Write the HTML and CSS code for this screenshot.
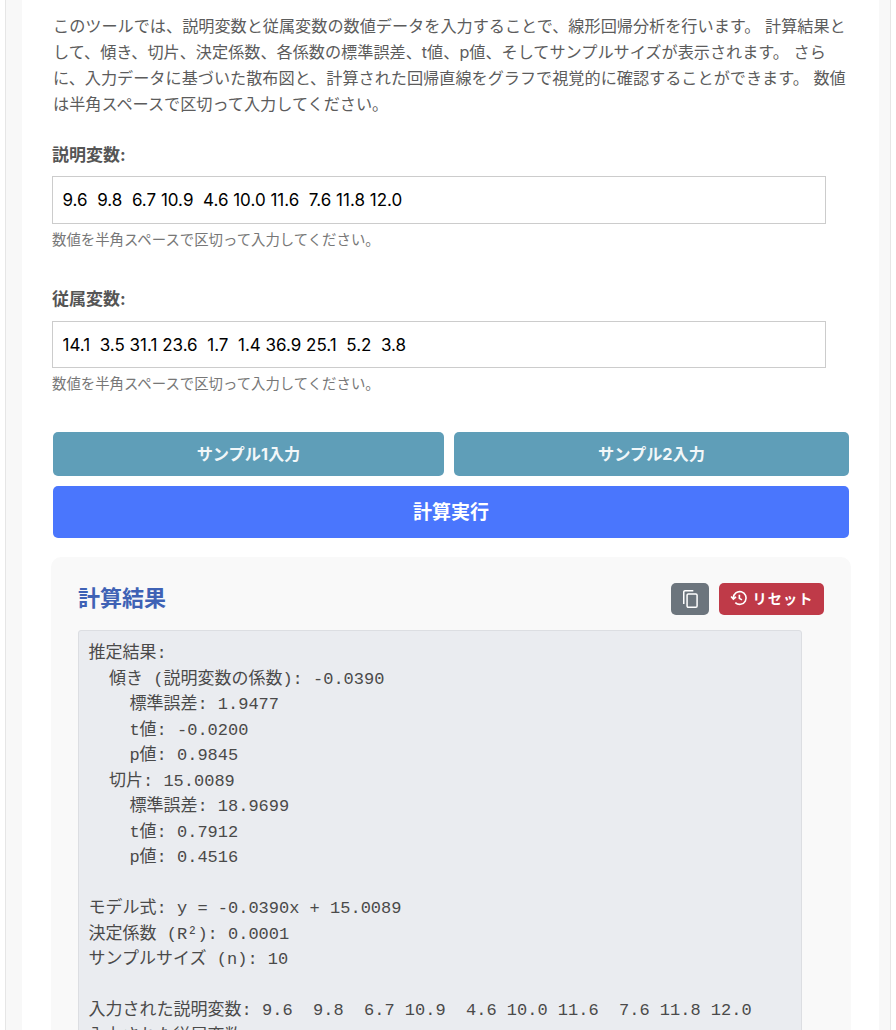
FILE: index.html
```html
<!DOCTYPE html>
<html lang="ja">
<head>
<meta charset="utf-8">
<title>線形回帰分析</title>
<link rel="stylesheet" href="styles.css">
</head>
<body>
<div class="outer">
<main class="card">
<p class="intro">このツールでは、説明変数と従属変数の数値データを入力することで、線形回帰分析を行います。 計算結果として、傾き、切片、決定係数、各係数の標準誤差、t値、p値、そしてサンプルサイズが表示されます。 さらに、入力データに基づいた散布図と、計算された回帰直線をグラフで視覚的に確認することができます。 数値は半角スペースで区切って入力してください。</p>
<div class="field">
<label class="label">説明変数:</label>
<input class="input" type="text" value="9.6  9.8  6.7 10.9  4.6 10.0 11.6  7.6 11.8 12.0">
<small class="hint">数値を半角スペースで区切って入力してください。</small>
</div>
<div class="field">
<label class="label">従属変数:</label>
<input class="input" type="text" value="14.1  3.5 31.1 23.6  1.7  1.4 36.9 25.1  5.2  3.8">
<small class="hint">数値を半角スペースで区切って入力してください。</small>
</div>
<div class="samples">
<button class="btn sample one">サンプル1入力</button>
<button class="btn sample two">サンプル2入力</button>
</div>
<button class="btn run">計算実行</button>
<section class="result">
<div class="result-head">
<h2 class="result-title">計算結果</h2>
<div class="actions">
<button class="btn icon-btn" aria-label="コピー"><svg width="20" height="20" viewBox="0 0 24 24" fill="none" stroke="#fff" stroke-width="1.800"><path d="M16 2H6A1.500 1.500 0 0 0 4.500 3.500V18"/><rect x="8.500" y="6" width="12" height="16" rx="1.500"/></svg></button>
<button class="btn reset"><svg width="18" height="18" viewBox="0 0 24 24" fill="none" stroke="#fff" stroke-width="2.200"><path d="M4.500 12a8.500 8.500 0 1 1 2.600 6.100"/><path d="M1.500 10l3 3.500 3.500-3"/><path d="M12.500 7.500V12.500l3.500 2"/></svg>リセット</button>
</div>
</div>
<pre class="output">推定結果:
  傾き (説明変数の係数): -0.0390
    標準誤差: 1.9477
    t値: -0.0200
    p値: 0.9845
  切片: 15.0089
    標準誤差: 18.9699
    t値: 0.7912
    p値: 0.4516

モデル式: y = -0.0390x + 15.0089
決定係数 (R²): 0.0001
サンプルサイズ (n): 10

入力された説明変数: 9.6  9.8  6.7 10.9  4.6 10.0 11.6  7.6 11.8 12.0
入力された従属変数: 14.1  3.5 31.1 23.6  1.7  1.4 36.9 25.1  5.2  3.8</pre>
</section>
</main>
</div>
</body>
</html>
```
FILE: styles.css
```css
html, body { margin: 0; padding: 0; height: 1030px; overflow: hidden; background: #fff; }
body { font-family: Inter, "Noto Sans CJK JP", sans-serif; color: #555; }
.outer { margin: 0 5px; height: 1030px; background: #f8f8f8; border-left: 1px solid #e6e6e6; border-right: 1px solid #e6e6e6; padding: 0 11px 0 16px; box-sizing: border-box; overflow: hidden; }
.card { background: #fff; height: 1030px; padding: 0 30px 0 31px; box-sizing: border-box; overflow: hidden; }
.intro { margin: 13px 0 0; font-size: 16.150px; line-height: 26px; color: #5c5c5c; }
.field { margin-top: 25.500px; }
.field + .field { margin-top: 37px; }
.label { display: block; font-size: 17px; font-weight: 700; line-height: 25.500px; color: #555; margin-left: -1px; }
.input { display: block; box-sizing: border-box; width: 774px; height: 47.500px; margin: 8.400px 0 0 -1px; padding: 0 9.500px; border: 1px solid #ccc; font: 17px/24px Inter, "Noto Sans CJK JP", sans-serif; color: #000; background: #fff; white-space: pre; }
.hint { display: block; margin: 6px 0 0 -1px; font-size: 14.400px; line-height: 20px; color: #777; }
.btn { border: 0; color: #fff; font-family: Inter, "Noto Sans CJK JP", sans-serif; border-radius: 5px; cursor: pointer; padding: 0 0 2px; }
.samples { display: flex; gap: 10px; margin-top: 37.500px; }
.sample { flex: none; height: 44px; background: #5f9eb8; font-size: 16.200px; font-weight: 700; color: #f2f7f9; }
.one { width: 391px; }
.two { width: 395px; }
.run { display: block; width: 796px; height: 52px; margin-top: 10px; background: #4a76fd; font-size: 19px; font-weight: 700; }
.result { width: 800px; margin: 19px 0 0 -2px; padding: 26px 27px; box-sizing: border-box; background: #f9f9f9; border-radius: 10px; }
.result-head { display: flex; justify-content: space-between; align-items: center; height: 32px; }
.result-title { margin: 0; font-size: 22px; font-weight: 600; color: #3f62b5; line-height: 30px; position: relative; top: -1px; }
.actions { display: flex; gap: 10px; }
.icon-btn { width: 38px; height: 32px; background: #6c757d; display: flex; align-items: center; justify-content: center; padding: 0; }
.reset { width: 105px; height: 32px; background: #bf3a48; font-size: 14.200px; font-weight: 700; letter-spacing: 1px; display: flex; align-items: center; justify-content: center; gap: 5px; padding: 0 0 1px; }
.output { width: 724px; box-sizing: border-box; margin: 15px 0 0; padding: 10.400px 9px 10px 9.600px; background: #eaecf0; border: 1px solid #dcdee2; border-radius: 3px; font: 17px/25.500px "Liberation Mono", "Noto Sans CJK JP", monospace; color: #4a4a4a; white-space: pre; }
```
